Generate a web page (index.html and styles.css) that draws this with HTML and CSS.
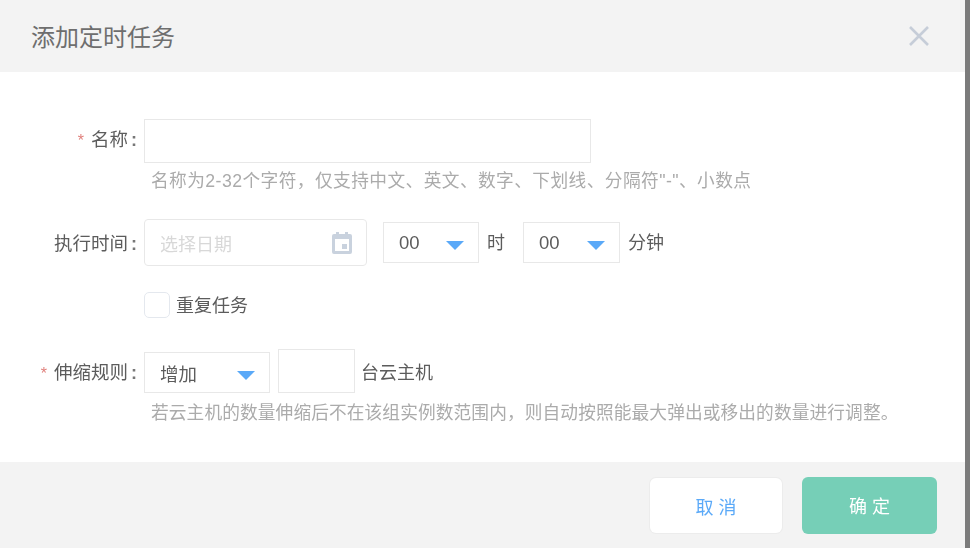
FILE: index.html
```html
<!DOCTYPE html>
<html lang="zh-CN">
<head>
<meta charset="utf-8">
<title>添加定时任务</title>
<link rel="stylesheet" href="styles.css">
</head>
<body>
<div class="modal">
  <header class="head">
    <h1 class="title">添加定时任务</h1>
    <svg class="close" width="22" height="22" viewBox="0 0 22 22"><path d="M2 2L20 20M20 2L2 20" fill="none" stroke="#c6cdd8" stroke-width="2.6"/></svg>
  </header>
  <main class="content">
    <div class="row row-name">
      <label class="label"><span class="req">*</span>名称</label><span class="colon">:</span>
      <div class="box box-name"></div>
    </div>
    <p class="hint hint-name">名称为2-32个字符，仅支持中文、英文、数字、下划线、分隔符"-"、小数点</p>
    <div class="row row-time">
      <label class="label">执行时间</label><span class="colon">:</span>
      <div class="date">
        <span class="placeholder">选择日期</span>
        <svg class="cal" width="22" height="24" viewBox="0 0 22 24"><path fill="#c9d2de" fill-rule="evenodd" d="M5 1h3v2h6V1h3v2h2a2 2 0 0 1 2 2v16a2 2 0 0 1-2 2H3a2 2 0 0 1-2-2V5a2 2 0 0 1 2-2h2zM4 8v12h14V8zM11 13h5v5h-5z"/></svg>
      </div>
      <div class="select sel-hour"><span>00</span><i class="caret"></i></div>
      <span class="unit unit-h">时</span>
      <div class="select sel-min"><span>00</span><i class="caret"></i></div>
      <span class="unit unit-m">分钟</span>
    </div>
    <div class="row row-repeat">
      <span class="check"></span>
      <span class="check-text">重复任务</span>
    </div>
    <div class="row row-rule">
      <label class="label"><span class="req">*</span>伸缩规则</label><span class="colon">:</span>
      <div class="select sel-rule"><span>增加</span><i class="caret"></i></div>
      <div class="box box-num"></div>
      <span class="unit unit-host">台云主机</span>
    </div>
    <p class="hint hint-rule">若云主机的数量伸缩后不在该组实例数范围内，则自动按照能最大弹出或移出的数量进行调整。</p>
  </main>
  <footer class="foot">
    <button class="btn btn-cancel">取 消</button>
    <button class="btn btn-ok">确 定</button>
  </footer>
</div>
<div class="scrollbar"></div>
</body>
</html>
```
FILE: styles.css
```css
* { box-sizing: border-box; }
html, body { margin: 0; height: 100%; overflow: hidden; }
body {
  display: flex;
  width: 970px;
  height: 548px;
  font-family: "Liberation Sans", "Noto Sans CJK SC", sans-serif;
  color: #5c5c5c;
  background: #fff;
}
.scrollbar { width: 5px; background: #7b7b7b; }
.modal { width: 965px; height: 548px; display: flex; flex-direction: column; filter: blur(0.35px); }
.head {
  height: 72px;
  flex: none;
  background: #f3f3f3;
  display: flex;
  align-items: center;
  justify-content: space-between;
  padding: 0 35px 0 31px;
}
.title { margin: 4px 0 0; font-size: 24px; font-weight: 400; color: #6e6e6e; line-height: 1; }
.close { display: block; }
.content { flex: 1; padding-top: 47px; }
.row { display: flex; }
.label { width: 128px; flex: none; text-align: right; font-size: 18.5px; line-height: 1; color: #5c5c5c; white-space: nowrap; }
.req { color: #e0807c; font-size: 16px; margin-right: 7px; }
.colon { width: 12px; flex: none; text-align: center; font-size: 18px; line-height: 1; font-weight: 700; color: #777; margin-right: 4px; }
.box { border: 1px solid #e8e8e8; background: #fff; }
.box-name { width: 447px; height: 44px; }
.row-name { align-items: center; }
.row-name .label, .row-name .colon { margin-bottom: 2px; }
.hint { margin: 0 0 0 151px; font-size: 17.7px; line-height: 18px; color: #ababab; white-space: nowrap; }
.hint-name { margin-top: 9px; letter-spacing: 0.43px; }
.row-time { margin-top: 29px; align-items: center; height: 47px; }
.row-time .label, .row-time .colon { margin-top: 3px; }
.row-time .unit { margin-top: 1px; }
.date {
  width: 223px;
  height: 47px;
  border: 1px solid #e8e8e8;
  border-radius: 4px;
  display: flex;
  align-items: center;
  justify-content: space-between;
  padding: 0 13px 0 15px;
  margin-right: 16px;
}
.placeholder { font-size: 18px; color: #d8d8d8; }
.cal { display: block; }
.select {
  height: 41px;
  border: 1px solid #e8e8e8;
  background: #fff;
  display: flex;
  align-items: center;
  justify-content: space-between;
  padding: 0 14px 0 15px;
  font-size: 18.5px;
  color: #5c5c5c;
}
.caret {
  width: 0;
  height: 0;
  margin-top: 5px;
  border-style: solid;
  border-width: 9px 9px 0;
  border-color: #5aa9f8 transparent transparent;
}
.sel-hour { width: 96px; }
.sel-min { width: 97px; }
.unit { font-size: 18px; line-height: 1; color: #5c5c5c; white-space: nowrap; }
.unit-h { margin: 0 18px 0 8px; }
.unit-m { margin-left: 8px; }
.row-repeat { margin: 26px 0 0 144px; align-items: center; height: 26px; }
.check { width: 26px; height: 26px; border: 1px solid #e4e8ee; border-radius: 5px; background: #fff; }
.check-text { margin: 2px 0 0 6px; font-size: 18px; line-height: 1; color: #5c5c5c; }
.row-rule { margin-top: 31px; height: 44px; align-items: center; }
.row-rule .label, .row-rule .colon { margin-top: 4px; }
.sel-rule { width: 126px; margin-top: 3px; }
.box-num { width: 77px; height: 44px; margin-left: 8px; }
.unit-host { margin-left: 6px; margin-top: 4px; }
.hint-rule { margin-top: 11px; letter-spacing: 0.11px; }
.foot {
  height: 86px;
  flex: none;
  background: #f3f3f3;
  display: flex;
  align-items: center;
  justify-content: flex-end;
  gap: 20px;
  padding-right: 28px;
}
.btn { border: 0; font-family: inherit; font-size: 18px; line-height: 1; border-radius: 6px; padding: 4px 0 0; }
.btn-cancel { width: 132px; height: 55px; background: #fff; color: #5aa9f8; box-shadow: 0 0 0 1px #ececec; margin-top: 1px; }
.btn-ok { width: 135px; height: 57px; background: #76cfb7; color: #fff; }
```
